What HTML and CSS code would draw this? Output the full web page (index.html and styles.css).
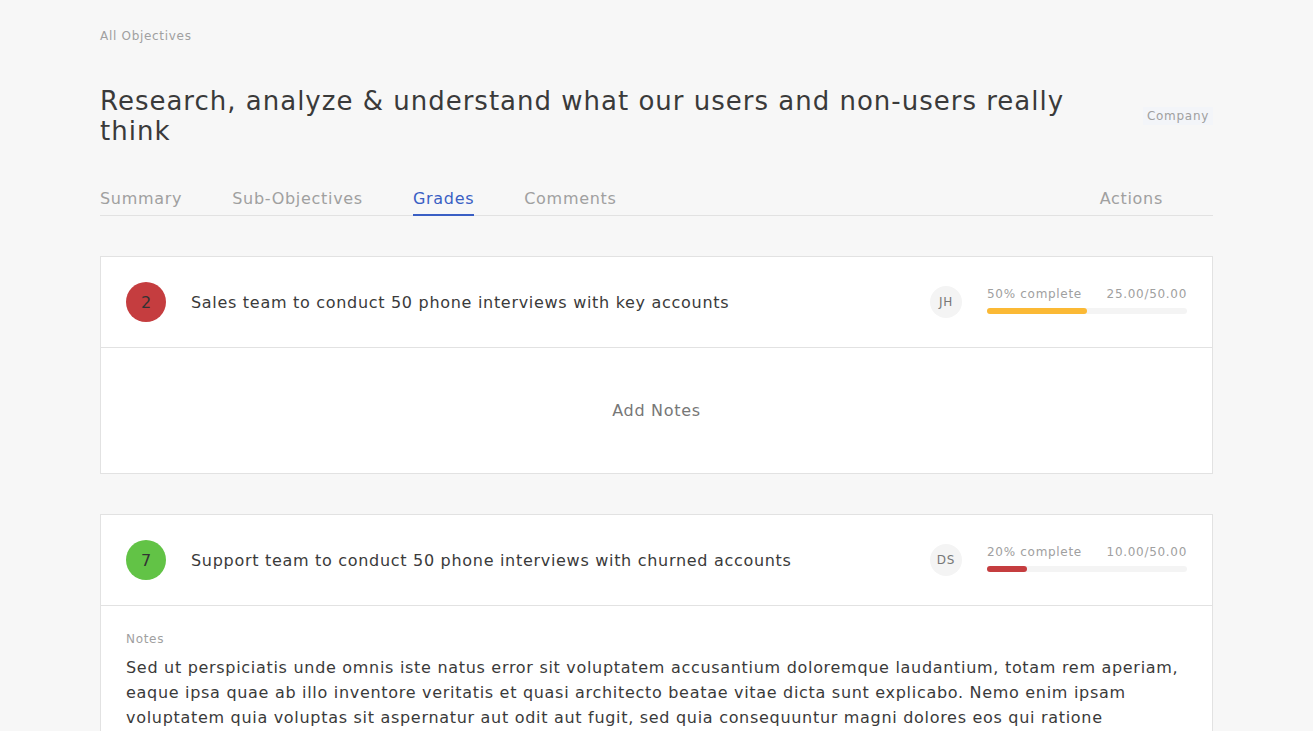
FILE: index.html
```html
<!DOCTYPE html>
<html lang="en">
<head>
    <meta charset="UTF-8">
    <meta name="viewport" content="width=device-width, initial-scale=1.0">
    <title>Objective - Grades</title>
    <link rel="stylesheet" href="styles.css">
</head>
<body>
    <div class="page">
        <a class="breadcrumb" href="#">All Objectives</a>

        <header class="objective-header">
            <h1 class="objective-title">Research, analyze &amp; understand what our users and non-users really think</h1>
            <span class="tag">Company</span>
        </header>

        <nav class="tabs">
            <a class="tab" href="#">Summary</a>
            <a class="tab" href="#">Sub-Objectives</a>
            <a class="tab active" href="#">Grades</a>
            <a class="tab" href="#">Comments</a>
            <a class="tab tab-actions" href="#">Actions</a>
        </nav>

        <section class="grade-card">
            <div class="grade-row">
                <div class="grade-score score-red">2</div>
                <div class="grade-name">Sales team to conduct 50 phone interviews with key accounts</div>
                <div class="avatar">JH</div>
                <div class="progress">
                    <div class="progress-labels">
                        <span>50% complete</span>
                        <span>25.00/50.00</span>
                    </div>
                    <div class="progress-track">
                        <div class="progress-fill fill-yellow" style="width: 50%"></div>
                    </div>
                </div>
            </div>
            <div class="grade-notes empty">
                <button class="add-notes">Add Notes</button>
            </div>
        </section>

        <section class="grade-card">
            <div class="grade-row">
                <div class="grade-score score-green">7</div>
                <div class="grade-name">Support team to conduct 50 phone interviews with churned accounts</div>
                <div class="avatar">DS</div>
                <div class="progress">
                    <div class="progress-labels">
                        <span>20% complete</span>
                        <span>10.00/50.00</span>
                    </div>
                    <div class="progress-track">
                        <div class="progress-fill fill-red" style="width: 20%"></div>
                    </div>
                </div>
            </div>
            <div class="grade-notes">
                <div class="notes-label">Notes</div>
                <p class="notes-text">Sed ut perspiciatis unde omnis iste natus error sit voluptatem accusantium doloremque laudantium, totam rem aperiam, eaque ipsa quae ab illo inventore veritatis et quasi architecto beatae vitae dicta sunt explicabo. Nemo enim ipsam voluptatem quia voluptas sit aspernatur aut odit aut fugit, sed quia consequuntur magni dolores eos qui ratione voluptatem sequi nesciunt. Neque porro quisquam est, qui dolorem ipsum quia dolor sit amet.</p>
            </div>
        </section>
    </div>
</body>
</html>
```

FILE: styles.css
```css
:root {
    --bg-page: #f7f7f7;
    --text-dark: #3a3a3a;
    --text-muted: #a0a0a0;
    --border: #e2e2e2;
    --accent: #3a5fc4;
}

* {
    box-sizing: border-box;
    margin: 0;
    padding: 0;
}

body {
    font-family: 'DejaVu Sans', sans-serif;
    background-color: var(--bg-page);
    color: var(--text-dark);
}

.page {
    width: 1113px;
    margin-left: 100px;
    padding-top: 29px;
}

.breadcrumb {
    display: block;
    font-size: 12px;
    letter-spacing: 0.7px;
    color: var(--text-muted);
    text-decoration: none;
    line-height: 15px;
}

.objective-header {
    display: flex;
    justify-content: space-between;
    align-items: center;
    margin-top: 42px;
}

.objective-title {
    font-size: 26px;
    font-weight: normal;
    letter-spacing: 1px;
    line-height: 30px;
    color: var(--text-dark);
    max-width: 1000px;
}

.tag {
    font-size: 12px;
    letter-spacing: 0.7px;
    color: var(--text-muted);
    background-color: #f3f5f9;
    padding: 2px 4px;
}

.tabs {
    display: flex;
    gap: 50px;
    margin-top: 38px;
    border-bottom: 1px solid var(--border);
    padding-right: 50px;
}

.tab {
    font-size: 16px;
    letter-spacing: 0.7px;
    color: var(--text-muted);
    text-decoration: none;
    padding: 5px 0 6px;
    border-bottom: 2px solid transparent;
    margin-bottom: -1px;
}

.tab.active {
    color: var(--accent);
    border-bottom-color: var(--accent);
}

.tab-actions {
    margin-left: auto;
}

.grade-card {
    background-color: #fff;
    border: 1px solid var(--border);
    margin-top: 40px;
}

.grade-row {
    display: flex;
    align-items: center;
    height: 91px;
    padding: 0 25px;
    border-bottom: 1px solid var(--border);
}

.grade-score {
    width: 40px;
    height: 40px;
    border-radius: 50%;
    display: flex;
    align-items: center;
    justify-content: center;
    font-size: 16px;
    color: #333;
    flex-shrink: 0;
}

.score-red { background-color: #c53d3f; }
.score-green { background-color: #62c346; }

.grade-name {
    flex: 1;
    margin-left: 25px;
    font-size: 16px;
    letter-spacing: 0.7px;
    color: var(--text-dark);
}

.avatar {
    width: 32px;
    height: 32px;
    border-radius: 50%;
    background-color: #f4f4f4;
    color: #777;
    font-size: 12px;
    letter-spacing: 0.7px;
    display: flex;
    align-items: center;
    justify-content: center;
}

.progress {
    width: 200px;
    margin-left: 25px;
    margin-bottom: 4px;
}

.progress-labels {
    display: flex;
    justify-content: space-between;
    font-size: 12px;
    letter-spacing: 0.7px;
    color: var(--text-muted);
    line-height: 15px;
}

.progress-track {
    margin-top: 6px;
    height: 6px;
    border-radius: 3px;
    background-color: #f4f4f4;
}

.progress-fill {
    height: 100%;
    border-radius: 3px;
}

.fill-yellow { background-color: #fbb935; }
.fill-red { background-color: #c53d3f; }

.grade-notes {
    padding: 26px 25px;
}

.grade-notes.empty {
    height: 125px;
    display: flex;
    align-items: center;
    justify-content: center;
}

.add-notes {
    font-family: inherit;
    font-size: 16px;
    letter-spacing: 0.7px;
    color: #777;
    background: none;
    border: none;
    cursor: pointer;
}

.notes-label {
    font-size: 12px;
    letter-spacing: 0.7px;
    color: var(--text-muted);
    line-height: 15px;
}

.notes-text {
    margin-top: 8px;
    font-size: 16px;
    letter-spacing: 0.7px;
    line-height: 25px;
    color: var(--text-dark);
}
```
